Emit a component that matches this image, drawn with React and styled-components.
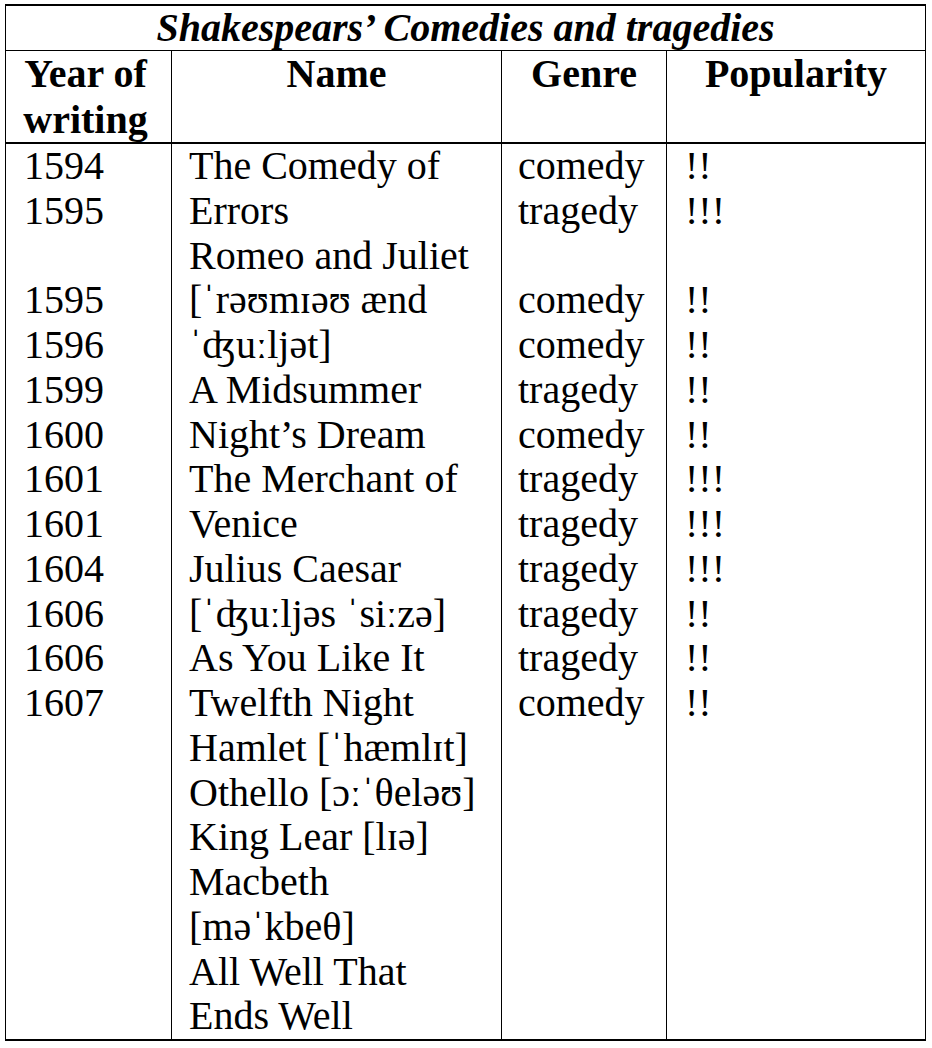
import React from 'react';
import styled, {createGlobalStyle} from 'styled-components';

const GlobalStyle = createGlobalStyle`
  html, body {
    margin: 0;
    padding: 0;
    background: #ffffff;
  }
  body {
    font-family: "Liberation Serif", "Times New Roman", "DejaVu Serif", serif;
    color: #000000;
  }
`;

const plays = [
    {year: '1594', name: 'The Comedy of', genre: 'comedy', pop: '!!'},
    {year: '1595', name: 'Errors', genre: 'tragedy', pop: '!!!'},
    {year: '', name: 'Romeo and Juliet', genre: '', pop: ''},
    {year: '1595', name: '[ˈrəʊmɪəʊ ænd', genre: 'comedy', pop: '!!'},
    {year: '1596', name: 'ˈʤuːljət]', genre: 'comedy', pop: '!!'},
    {year: '1599', name: 'A Midsummer', genre: 'tragedy', pop: '!!'},
    {year: '1600', name: 'Night’s Dream', genre: 'comedy', pop: '!!'},
    {year: '1601', name: 'The Merchant of', genre: 'tragedy', pop: '!!!'},
    {year: '1601', name: 'Venice', genre: 'tragedy', pop: '!!!'},
    {year: '1604', name: 'Julius Caesar', genre: 'tragedy', pop: '!!!'},
    {year: '1606', name: '[ˈʤuːljəs ˈsiːzə]', genre: 'tragedy', pop: '!!'},
    {year: '1606', name: 'As You Like It', genre: 'tragedy', pop: '!!'},
    {year: '1607', name: 'Twelfth Night', genre: 'comedy', pop: '!!'},
    {year: '', name: 'Hamlet [ˈhæmlɪt]', genre: '', pop: ''},
    {year: '', name: 'Othello [ɔːˈθeləʊ]', genre: '', pop: ''},
    {year: '', name: 'King Lear [lɪə]', genre: '', pop: ''},
    {year: '', name: 'Macbeth', genre: '', pop: ''},
    {year: '', name: '[məˈkbeθ]', genre: '', pop: ''},
    {year: '', name: 'All Well That', genre: '', pop: ''},
    {year: '', name: 'Ends Well', genre: '', pop: ''},
];

const Table = {
    Wrapper: styled.div`
        box-sizing: border-box;
        width: 921px;
        margin: 4px 0 0 5px;
        border: 1px solid #000;
        border-top-width: 2px;
        border-bottom-width: 2px;
        display: grid;
        grid-template-columns: 166px 330px 165px 258px;
        font-size: 40px;
    `,
    Title: styled.div`
        grid-column: 1 / -1;
        height: 44px;
        line-height: 44px;
        text-align: center;
        font-weight: bold;
        font-style: italic;
        border-bottom: 1px solid #000;
    `,
    Head: styled.div`
        box-sizing: border-box;
        font-weight: bold;
        text-align: center;
        line-height: 45.5px;
        padding-right: ${props => props.shift || 0}px;
        border-bottom: 2px solid #000;
        border-right: ${props => props.last ? 'none' : '1px solid #000'};
    `,
    Column: styled.div`
        box-sizing: border-box;
        padding-left: ${props => props.pad}px;
        border-right: ${props => props.last ? 'none' : '1px solid #000'};
        display: flex;
        flex-direction: column;
    `,
    Line: styled.div`
        height: 44.75px;
        line-height: 44.75px;
        white-space: nowrap;
    `,
};

const columns = [
    {key: 'year', pad: 18},
    {key: 'name', pad: 17},
    {key: 'genre', pad: 16},
    {key: 'pop', pad: 18},
];

const App = () => {
    return (
        <>
            <GlobalStyle />
            <Table.Wrapper>
                <Table.Title>Shakespears’ Comedies and tragedies</Table.Title>
                <Table.Head shift={6}>Year of<br/>writing</Table.Head>
                <Table.Head>Name</Table.Head>
                <Table.Head>Genre</Table.Head>
                <Table.Head last>Popularity</Table.Head>
                {columns.map((col, i) => (
                    <Table.Column key={col.key} pad={col.pad} last={i === columns.length - 1}>
                        {plays.map((row, j) => (
                            <Table.Line key={j}>{row[col.key] || '\u00a0'}</Table.Line>
                        ))}
                    </Table.Column>
                ))}
            </Table.Wrapper>
        </>
    );
}

export default App
